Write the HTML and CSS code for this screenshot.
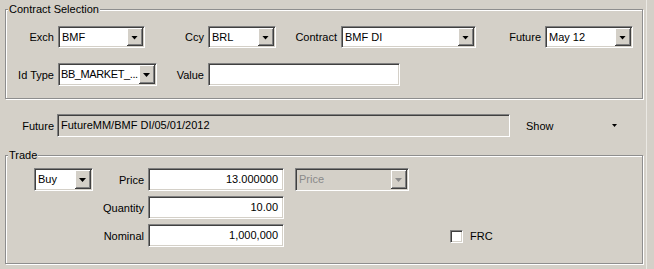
FILE: index.html
```html
<!DOCTYPE html>
<html lang="en">
<head>
<meta charset="utf-8"/>
<title>Trade entry</title>
<link rel="stylesheet" href="styles.css">
</head>
<body>
<div class="window">

<fieldset class="group contract">
<legend>Contract Selection</legend>
<div class="row">
	<label class="lbl lbl-exch">Exch</label>
	<div class="combo exch"><span class="value">BMF</span><span class="drop"></span></div>
	<label class="lbl lbl-ccy">Ccy</label>
	<div class="combo ccy"><span class="value">BRL</span><span class="drop"></span></div>
	<label class="lbl lbl-contract">Contract</label>
	<div class="combo contract-box"><span class="value">BMF DI</span><span class="drop"></span></div>
	<label class="lbl lbl-future">Future</label>
	<div class="combo future"><span class="value">May 12</span><span class="drop"></span></div>
</div>
<div class="row row-second">
	<label class="lbl lbl-exch">Id Type</label>
	<div class="combo idtype"><span class="value">BB_MARKET_...</span><span class="drop"></span></div>
	<label class="lbl lbl-value">Value</label>
	<div class="textbox value-box"></div>
</div>
</fieldset>

<div class="row future-row">
	<label class="lbl lbl-futurename">Future</label>
	<div class="textbox readonly future-name">FutureMM/BMF DI/05/01/2012</div>
	<div class="flat-combo"><span class="value">Show</span><span class="small-arrow"></span></div>
</div>

<fieldset class="group trade">
<legend>Trade</legend>
<div class="trade-grid">
	<div class="combo side"><span class="value">Buy</span><span class="drop"></span></div>
	<label class="lbl">Price</label>
	<div class="textbox num">13.000000</div>
	<div class="combo disabled price-type"><span class="value">Price</span><span class="drop"></span></div>

	<label class="lbl qty-lbl">Quantity</label>
	<div class="textbox num qty">10.00</div>

	<label class="lbl qty-lbl">Nominal</label>
	<div class="textbox num qty">1,000,000</div>
	<label class="check"><span class="box"></span>FRC</label>
</div>
</fieldset>

</div>
</body>
</html>
```

FILE: styles.css
```css
html, body {
	margin: 0;
	background: #d4d0c8;
}
body {
	font-family: "Liberation Sans", Arial, sans-serif;
	font-size: 11px;
	color: #000;
	width: 654px;
	height: 269px;
	overflow: hidden;
}
.window {
	width: 647px;
	height: 269px;
	box-sizing: border-box;
	padding: 3px 0 0 5px;
	border-right: 1px solid #ebe9e4;
}
.group {
	margin: 0;
	padding: 0;
	width: 638px;
	box-sizing: border-box;
	border: 1px solid #8e8e8e;
	box-shadow: inset 1px 1px #fff, 1px 1px #fff;
	min-width: 0;
}
.group legend {
	margin-left: 2px;
	padding: 0 1px;
	line-height: 13px;
	background: #d4d0c8;
}
.contract {
	padding: 10px 0 12px;
}
.row {
	display: flex;
	align-items: center;
}
.row-second {
	margin-top: 15px;
}
.lbl {
	box-sizing: border-box;
	text-align: right;
	padding-right: 4px;
	white-space: nowrap;
}
.lbl-exch { width: 52px; }
.lbl-ccy { width: 63px; }
.lbl-contract { width: 65px; }
.lbl-future { width: 69px; }
.lbl-value { width: 51px; }

/* sunken combo box */
.combo {
	display: flex;
	height: 22px;
	box-sizing: border-box;
	padding: 1px;
	border: 1px solid;
	border-color: #808080 #fff #fff #808080;
	box-shadow: inset 1px 1px #404040, inset -1px -1px #d4d0c8;
	background: #fff;
}
.combo .value {
	flex: 1;
	padding-left: 2px;
	line-height: 18px;
	overflow: hidden;
	white-space: nowrap;
}
.combo .drop {
	width: 16px;
	background: #d4d0c8;
	box-shadow: inset -1px -1px #404040, inset 1px 1px #fff, inset -2px -2px #808080;
	display: flex;
	align-items: center;
	justify-content: center;
}
.combo .drop::after {
	content: "";
	width: 7px;
	height: 4px;
	background: #000;
	clip-path: polygon(0 0, 100% 0, 50% 100%);
	margin: 1px 1px 0 0;
}
.combo.disabled {
	background: #d4d0c8;
	color: #8a8a8a;
}
.combo.disabled .drop::after {
	background: #8a8a8a;
}
.exch { width: 87px; }
.ccy { width: 68px; }
.contract-box { width: 135px; }
.future { width: 88px; }
.idtype { width: 99px; height: 23px; }
.idtype .value {
	letter-spacing: -0.4px;
	padding-left: 1px;
}

.textbox {
	height: 23px;
	box-sizing: border-box;
	border: 1px solid;
	border-color: #808080 #fff #fff #808080;
	box-shadow: inset 1px 1px #404040, inset -1px -1px #d4d0c8;
	background: #fff;
	padding: 0 3px;
	line-height: 21px;
	white-space: nowrap;
}
.textbox.readonly {
	background: #d4d0c8;
}
.textbox.num {
	text-align: right;
	padding-right: 5px;
}
.value-box { width: 192px; }

.future-row {
	margin: 15px 0 12px;
}
.lbl-futurename {
	width: 52px;
	padding-right: 3px;
}
.future-name {
	width: 453px;
}
.flat-combo {
	display: flex;
	align-items: center;
	width: 118px;
	padding-left: 16px;
	box-sizing: border-box;
}
.flat-combo .value {
	flex: 1;
}
.small-arrow {
	width: 5px;
	height: 3px;
	background: #000;
	clip-path: polygon(0 0, 100% 0, 50% 100%);
	margin-right: 11px;
}

.trade {
	padding: 6px 0 16px;
}
.trade-grid {
	display: grid;
	grid-template-columns: 28px 59px 55px 136px 11px 114px 41px 80px;
	grid-auto-rows: 23px;
	row-gap: 5px;
	align-items: center;
}
.side {
	grid-column: 2;
	height: 23px;
}
.trade-grid .lbl {
	grid-column: 3;
}
.trade-grid .qty-lbl {
	grid-column: 2 / 4;
}
.trade-grid .num {
	grid-column: 4;
}
.price-type {
	grid-column: 6;
	height: 23px;
}
.check {
	grid-column: 8;
	display: flex;
	align-items: center;
	gap: 7px;
	padding-top: 1px;
}
.check .box {
	width: 13px;
	height: 13px;
	box-sizing: border-box;
	border: 1px solid;
	border-color: #808080 #fff #fff #808080;
	box-shadow: inset 1px 1px #404040, inset -1px -1px #d4d0c8;
	background: #fff;
}
```
